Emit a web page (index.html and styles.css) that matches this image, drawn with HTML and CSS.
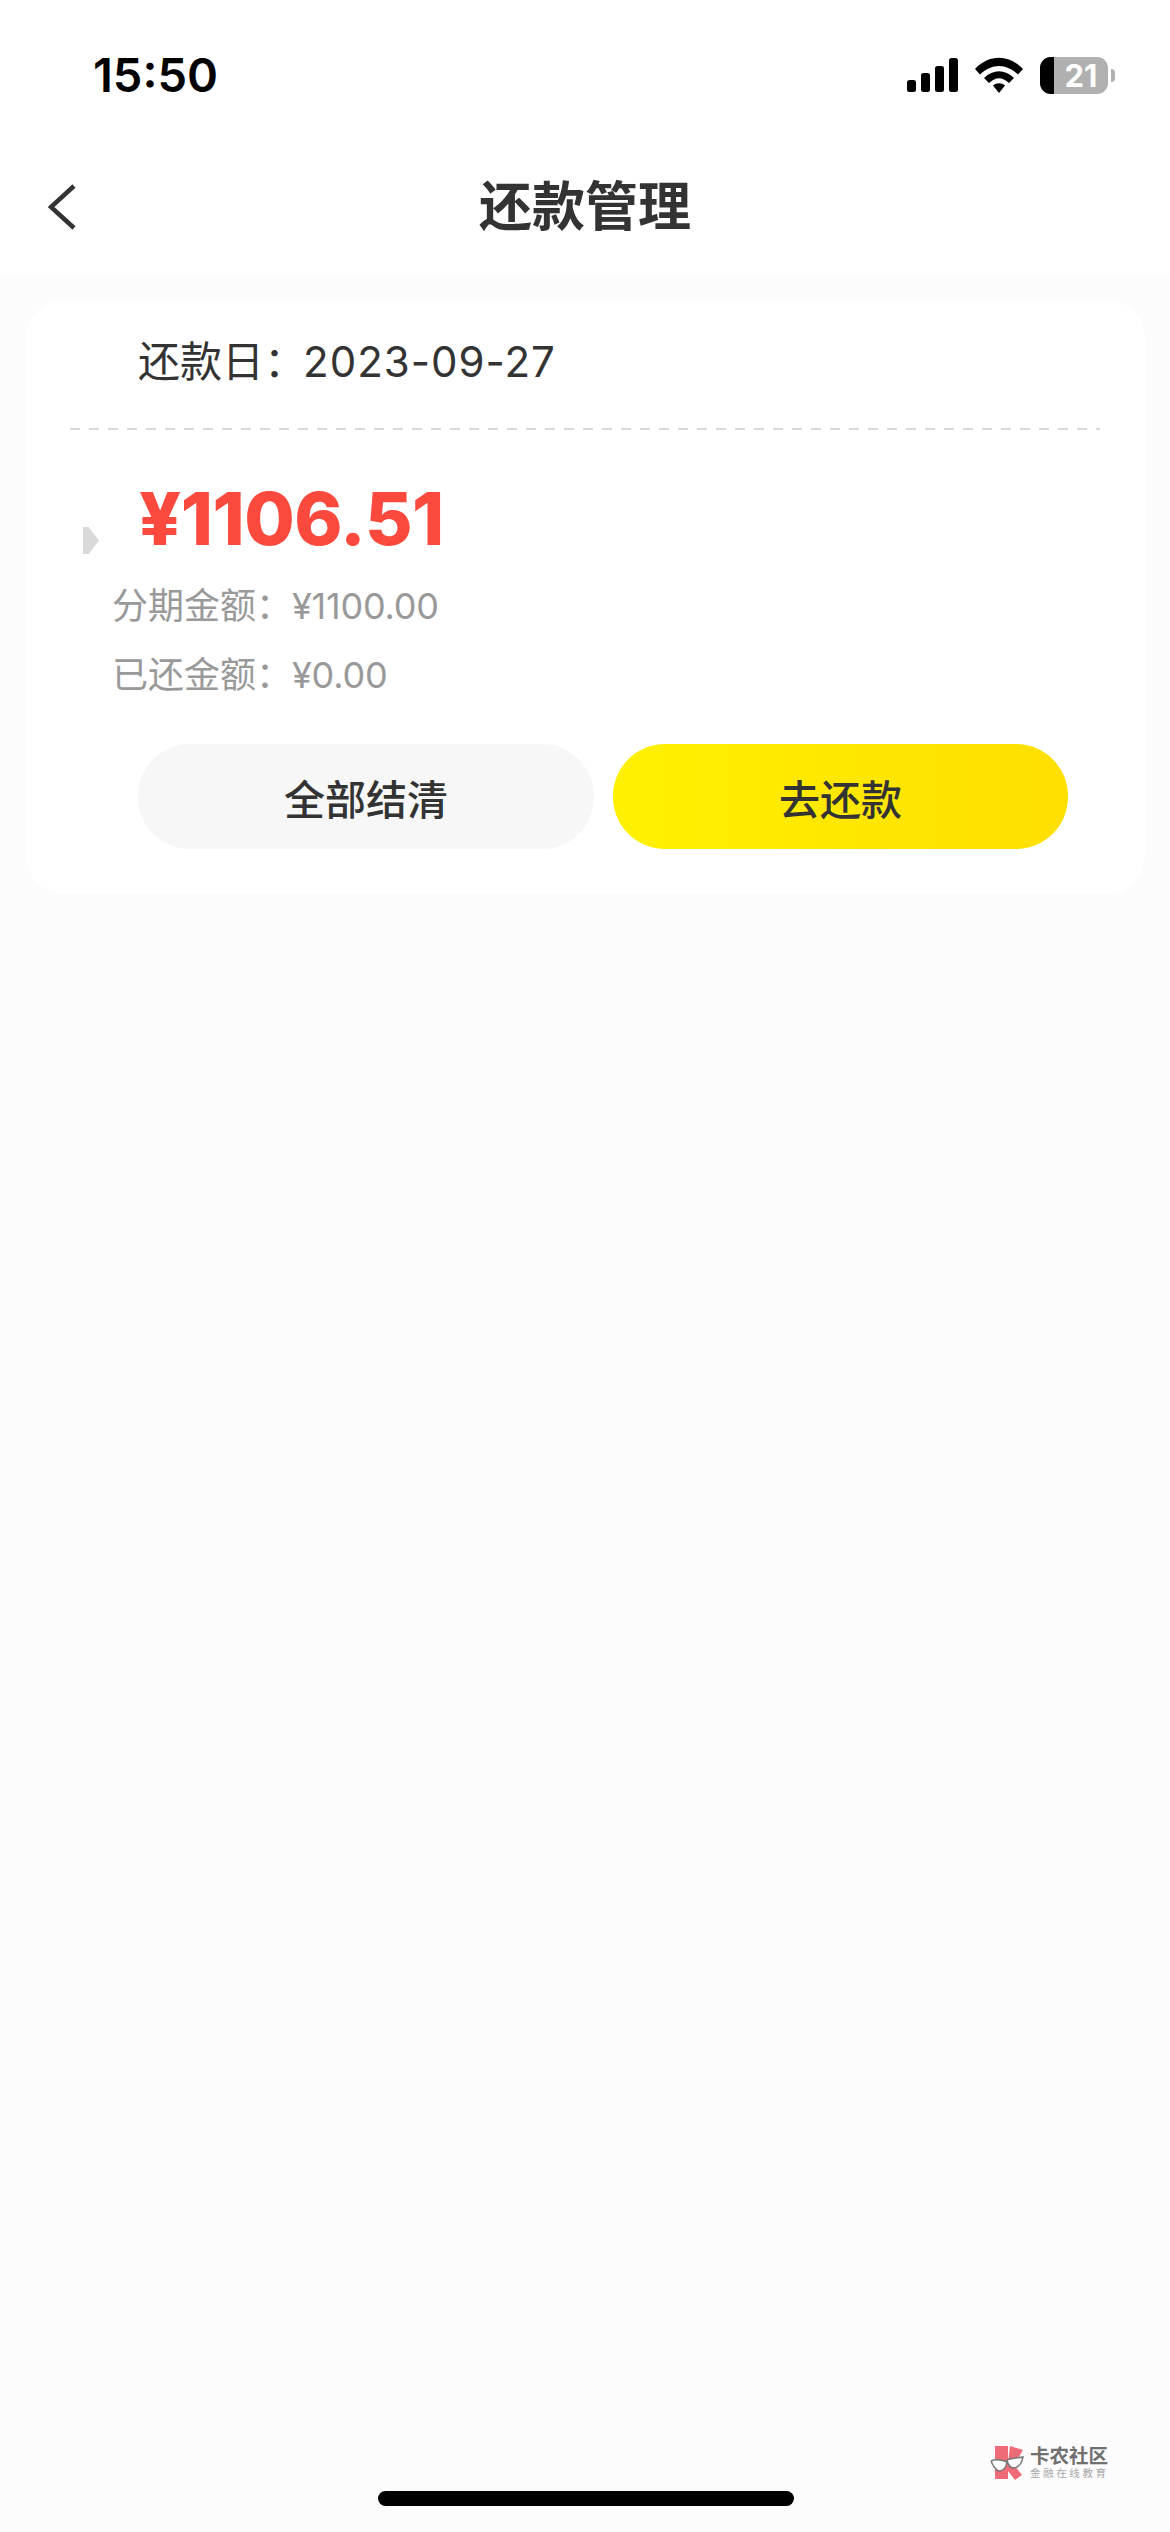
FILE: index.html
```html
<!DOCTYPE html>
<html lang="zh-CN">
<head>
  <meta charset="UTF-8" />
  <title>还款管理</title>
  <link rel="stylesheet" href="styles.css">
</head>
<body>
  <!-- STATUS BAR + TITLE -->
  <header class="top">
    <div class="status">
      <span class="time">15:50</span>
      <div class="status-icons">
        <svg class="signal" width="51" height="34" viewBox="0 0 51 34"><rect x="0" y="22" width="9" height="12" rx="2.5"/><rect x="14" y="15" width="9" height="19" rx="2.5"/><rect x="28" y="8" width="9" height="26" rx="2.5"/><rect x="42" y="0" width="9" height="34" rx="2.5"/></svg>
        <svg class="wifi" width="48" height="36" viewBox="0 0 48 36"><path d="M0 12 C14 -3 34 -3 48 12 L43 17.500 C31 6 17 6 5 17.500 Z"/><path d="M9 21 C18 12 30 12 39 21 L34 26 C27 19.500 21 19.500 14 26 Z"/><path d="M18 28.500 C21.500 25.500 26.500 25.500 30 28.500 L24 36 Z"/></svg>
        <div class="battery">
          <span class="battery-level"></span>
          <span class="battery-num">21</span>
        </div>
        <span class="battery-nub"></span>
      </div>
    </div>
    <div class="nav">
      <svg class="back" width="28" height="46" viewBox="0 0 28 46"><path d="M26 2 L3 23 L26 44" /></svg>
      <h1>还款管理</h1>
    </div>
  </header>

  <!-- CARD -->
  <section class="card">
    <div class="due">还款日：<span class="due-date">2023-09-27</span></div>
    <div class="dash"></div>
    <div class="amount-row">
      <span class="arrow"></span>
      <div class="amount">¥1106.51</div>
    </div>
    <p class="info">分期金额：<span class="info-num">¥1100.00</span></p>
    <p class="info second">已还金额：<span class="info-num">¥0.00</span></p>
    <div class="actions">
      <button class="btn btn-grey">全部结清</button>
      <button class="btn btn-yellow">去还款</button>
    </div>
  </section>

  <!-- WATERMARK -->
  <div class="mark">
    <svg width="34" height="35" viewBox="0 0 34 35">
      <path class="mark-pink" d="M5 1 H18 V34 H5 Z"/>
      <path class="mark-pink" d="M20 1 L33 5 L24 20 L32 30 L25 35 L18 26 V18 Z"/>
      <path class="mark-white" d="M1 16 C6 14 12 15 17 17 C16 23 13 26 9 26 C5 25 3 21 1 16 Z"/>
      <path class="mark-white" d="M17 15 C22 13 28 13 33 12 C32 18 29 22 24 23 C20 23 18 20 17 15 Z"/>
      <path class="mark-line" d="M1 16 C6 14 12 15 17 17 C16 23 13 26 9 26 C5 25 3 21 1 16 M17 15 C22 13 28 13 33 12 C32 18 29 22 24 23 C20 23 18 20 17 15"/>
    </svg>
    <div class="mark-text">
      <span class="mark-name">卡农社区</span>
      <span class="mark-sub">金融在线教育</span>
    </div>
  </div>

  <div class="home-bar"></div>
</body>
</html>
```

FILE: styles.css
```css
*{box-sizing:border-box}
html,body{height:2532px}
body{margin:0;padding:0;background:#fcfcfc;color:#333;font-family:"Inter","Noto Sans CJK SC",sans-serif;position:relative;overflow:hidden}

.top{background:#fff;height:273px;padding-top:53px}
.status{display:flex;justify-content:space-between;align-items:center;height:44px;padding:0 55px 0 93px}
.time{font-size:47px;font-weight:600;color:#000;line-height:44px}
.status-icons{display:flex;align-items:center}
.signal,.wifi{fill:#000;display:block}
.wifi{margin-left:17px}
.battery{position:relative;width:68px;height:37px;margin-left:17px;background:#b0b0b0;border-radius:11px}
.battery-level{position:absolute;left:0;top:0;width:14px;height:100%;background:#000;border-radius:11px 0 0 11px}
.battery-num{position:absolute;left:14px;right:0;top:0;text-align:center;color:#fff;font-size:31px;font-weight:700;line-height:37px}
.battery-nub{width:4px;height:13px;margin-left:3px;background:#b0b0b0;border-radius:0 4px 4px 0}

.nav{position:relative;height:80px;margin-top:70px;display:flex;justify-content:center;align-items:center}
.nav h1{margin:0;font-size:53px;font-weight:700;line-height:80px;color:#333}
.back{position:absolute;left:48px;top:17px;fill:none;stroke:#333;stroke-width:4.500}

.card{width:1119px;height:594px;margin:27px 0 0 26px;background:#fff;border-radius:38px;padding-top:32px}
.due{padding-left:112px;font-size:42px;line-height:60px;color:#333;font-weight:400}
.due-date{margin-left:-3px;letter-spacing:1px}
.dash{height:2px;margin:36px 45px 0 44px;background:repeating-linear-gradient(to right,#d8d8d8 0 10px,transparent 10px 19px)}
.amount-row{position:relative;height:94px;margin-top:41px;padding-left:113px}
.amount{font-size:73px;font-weight:800;line-height:96px;color:#fb4a3d;letter-spacing:-.5px}
.arrow{position:absolute;left:57px;top:56px;width:16px;height:27px;background:#d9d9d9;clip-path:polygon(0 0,35% 0,100% 50%,35% 100%,0 100%)}
.info{margin:0;padding-left:86px;font-size:36px;line-height:50px;color:#999;margin-top:16px}
.info.second{margin-top:19px}
.info-num{margin-left:0;letter-spacing:-.2px}
.actions{display:flex;gap:19px;margin:44px 0 0 112px}
.btn{width:456px;height:105px;border:0;border-radius:52px;font-family:inherit;font-size:41px;font-weight:500;color:#333;padding:0}
.btn-grey{background:#f7f7f7}
.btn-yellow{width:455px;background:linear-gradient(90deg,#fff000,#ffdf00)}

.mark{position:absolute;left:990px;top:2445px;display:flex;gap:6px}
.mark-pink{fill:#ee6b78}
.mark-white{fill:#fff}
.mark-line{fill:none;stroke:#777;stroke-width:1.500}
.mark-text{display:flex;flex-direction:column;color:#777}
.mark-name{font-size:19.500px;font-weight:700;line-height:22px;white-space:nowrap;color:#707070}
.mark-sub{font-size:10.500px;line-height:12px;margin-top:1px;letter-spacing:2.600px;white-space:nowrap;color:#a8a8a8}

.home-bar{position:absolute;left:378px;top:2491px;width:416px;height:15px;background:#000;border-radius:8px}
```
